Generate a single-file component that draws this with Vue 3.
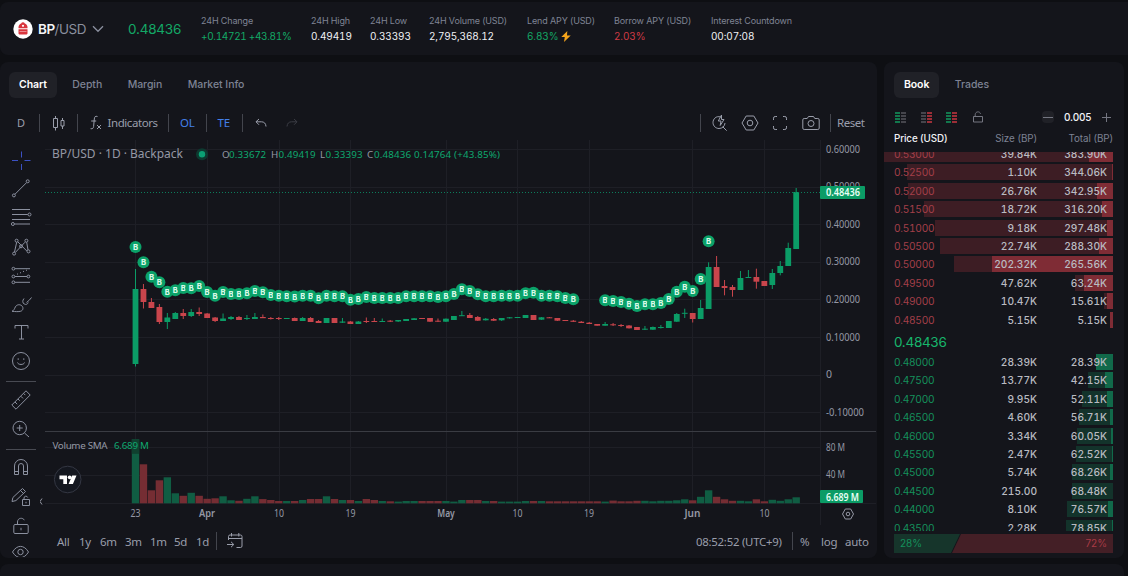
<script setup>
const stats = [
  { label: '24H Change', value: '+0.14721 +43.81%', tone: 'up change' },
  { label: '24H High', value: '0.49419', tone: '' },
  { label: '24H Low', value: '0.33393', tone: '' },
  { label: '24H Volume (USD)', value: '2,795,368.12', tone: '' },
  { label: 'Lend APY (USD)', value: '6.83%', tone: 'up', bolt: true },
  { label: 'Borrow APY (USD)', value: '2.03%', tone: 'down' },
  { label: 'Interest Countdown', value: '00:07:08', tone: '' }
]

// Left drawing toolbar: slot height and stroke paths in a 28x28 box
const tools = [
  { h: 28, cls: 'blue', d: 'M14.500 4.500v6M14.500 17v6M5 13.500h6M17.500 13.500h6' },
  { h: 26, d: 'M8 20.2 19.5 8.7M19.2 7.3a1.5 1.5 0 1 0 3 0a1.5 1.5 0 1 0-3 0M5.4 21.4a1.5 1.5 0 1 0 3 0a1.5 1.5 0 1 0-3 0' },
  { h: 32, d: 'M5 6.5h18M5 11.5h15.8M5 16.5h18M7.5 21h15.5M21 11.5a1.5 1.5 0 1 0 3 0a1.5 1.5 0 1 0-3 0M4.4 21a1.5 1.5 0 1 0 3 0a1.5 1.5 0 1 0-3 0' },
  { h: 26, d: 'M7.5 20 9.7 10.2M10.8 9.8 19.8 19M8.4 20.4 18 10.2M19.7 10.2 21 18M8.1 8.7a1.5 1.5 0 1 0 3 0a1.5 1.5 0 1 0-3 0M17.9 8.7a1.5 1.5 0 1 0 3 0a1.5 1.5 0 1 0-3 0M5.6 21.6a1.5 1.5 0 1 0 3 0a1.5 1.5 0 1 0-3 0M20 19.4a1.5 1.5 0 1 0 3 0a1.5 1.5 0 1 0-3 0M12.5 14.3a1.5 1.5 0 1 0 3 0a1.5 1.5 0 1 0-3 0' },
  { h: 32, d: 'M8 7.7h15M8 15.5h12M8 21.3h15M5 7.7a1.4 1.4 0 1 0 2.8 0a1.4 1.4 0 1 0-2.8 0M5 15.5a1.4 1.4 0 1 0 2.8 0a1.4 1.4 0 1 0-2.8 0M20 15.5a1.4 1.4 0 1 0 2.8 0a1.4 1.4 0 1 0-2.8 0M5 21.3a1.4 1.4 0 1 0 2.8 0a1.4 1.4 0 1 0-2.8 0M10 13.3l1-.5M13 12l1-.5M16 10.7l1-.5M19 9.5l1-.5' },
  { h: 28, d: 'M5 20.3c2.200-1 2.400-2.500 3.300-4.300 1.300-2.500 4.500-3 6.500-1.200 2 2 1.200 4.700-1 5.400-2.300.7-5.500.4-8.800.1zM17 7.500c-1.800 2-1.500 4.500.2 5.500 1.700 1 3.500.2 4-1.500M19.500 11.500c2-1.200 3.500-3 5-5' },
  { h: 28, d: 'M8 9.500v-3h13v3M14.500 6.500v13.500M12 20h5' },
  { h: 28, d: 'M5.500 14a8.500 8.500 0 1 0 17 0a8.500 8.500 0 1 0-17 0M10.500 15.500c.5 2.600 6.500 2.600 7 0M11.200 11.300v1.600M16.800 11.300v1.600' },
  { h: 13, sep: true },
  { h: 23, d: 'M4.800 19 19 4.800l4.200 4.200L9 23.200zM8 16l2.200 2.200M11 13l1.700 1.700M13.800 10.200l2.200 2.200M16.600 7.400l1.700 1.700' },
  { h: 36, d: 'M6 13a6.700 6.700 0 1 0 13.400 0a6.700 6.700 0 1 0-13.400 0M17.500 18l4.500 4M9.700 13h6M12.700 10v6' },
  { h: 5, sep: true },
  { h: 30, d: 'M7.500 21.500v-8.500a6.500 6.500 0 0 1 13 0v8.500h-4v-8.500a2.500 2.500 0 0 0-5 0v8.500zM7.500 18.500h4M16.500 18.500h4' },
  { h: 30, d: 'M5 18.500 5.900 14.500 15.500 5.500l3 3L8.900 17.600zM13.500 7.500l3 3M15.500 16.500h7v6h-7zM17 16.500v-1.500a1.900 1.900 0 0 1 3.700-.5M19 18.800v1.500' },
  { h: 28, d: 'M8 12.500h12a1.200 1.200 0 0 1 1.200 1.200v6.600a1.200 1.200 0 0 1-1.200 1.200h-12a1.200 1.200 0 0 1-1.200-1.200v-6.600a1.200 1.200 0 0 1 1.200-1.200M10.500 12.500v-2.500c0-4.300 5.500-4.800 6.800-1.800M14 15.800v2.500' },
  { h: 22, d: 'M5.500 15c4.500-7.500 11.500-7.500 16 0c-4.500 7.500-11.500 7.500-16 0M10.800 15a2.700 2.700 0 1 0 5.400 0a2.700 2.700 0 1 0-5.400 0' }
]

// Daily candles: direction, high, body top, body bottom, low, label y, volume height
const G = 1
const R = 0
const series = [
  [G, 269, 289, 364, 366.5, 247, 64], [R, 284, 289, 302, 308.5, 262.3, 39], [R, 298, 302, 308, 308, 276.7, 13],
  [R, 304, 307, 322, 324, 282.3, 23], [G, 313, 317.5, 322, 329, 291.7, 26], [G, 312, 313, 319, 319, 290.3, 10],
  [R, 309, 313, 316, 319, 288, 7.5], [G, 309, 312, 316, 317, 288.3, 10.5], [R, 307.5, 312, 314, 316, 286, 7.5],
  [R, 313, 313.5, 318, 318, 292, 4.5], [R, 317, 317.5, 321, 322, 295.7, 5], [G, 313.5, 318.5, 321, 321, 292, 7],
  [G, 316, 317, 319, 320, 294, 3], [R, 316, 317, 320, 320, 294, 2.5], [G, 315, 318, 319, 320, 293.3, 4.5],
  [G, 313, 317, 319, 319, 291, 7], [R, 314.5, 317, 318.2, 318, 292.3, 4.2], [R, 317, 318, 319, 319.5, 295, 3.3],
  [R, 317, 318, 319, 320, 295.7, 2.3], [G, 318, 318, 319, 319, 296.3, 2.3], [R, 317.5, 318, 321, 321, 296.5, 2.3],
  [G, 317, 318, 321, 321, 295.7, 3.3], [R, 317, 318, 322, 322, 295.7, 4.3], [R, 320, 321, 323, 323, 298.3, 4.3],
  [G, 318, 318, 323, 323, 295.7, 7], [R, 318, 318, 323, 323, 296.3, 4.3], [G, 318, 321.5, 322.7, 323, 296.3, 3.3],
  [R, 321, 321.5, 324, 324, 299.7, 3.3], [G, 321, 321.5, 324, 324, 299, 2.3], [R, 317.5, 321, 322, 323, 297, 4.3],
  [R, 318, 321, 322, 322, 298, 3.3], [G, 318.5, 321, 322, 322, 298, 2.3], [R, 320, 320.7, 321.7, 322, 298, 2],
  [G, 320, 320, 321.5, 322, 298, 1.7], [G, 319, 319, 321, 321, 296.3, 2.3], [G, 318, 318.3, 320, 320, 296.3, 2.3],
  [R, 318, 318, 319, 319, 296.3, 2.3], [R, 318, 318, 321.7, 322, 296.3, 2.3], [R, 318.5, 320.7, 321.7, 322, 297, 2.3],
  [G, 318.5, 318.7, 321.7, 322, 296.3, 2.3], [G, 316, 316, 320, 320, 294, 1.7], [G, 311, 315.2, 316.2, 316, 289.3, 3.3],
  [R, 313, 315, 318, 318, 291, 3.3], [R, 316, 317, 320.7, 321, 294.3, 3.3], [G, 318, 318.7, 320.3, 320.5, 296.3, 2.3],
  [R, 318, 319, 320.7, 321, 296.3, 2.3], [G, 318, 318, 320.3, 321, 295.7, 1.7], [G, 317, 317.3, 318.3, 318.5, 295.7, 1.7],
  [G, 317, 317, 318, 318, 295.7, 1.7], [G, 315, 315, 318, 318, 293.3, 2.3], [R, 315, 315, 320, 320, 292.7, 2.3],
  [G, 317, 317.3, 319.7, 320, 295.7, 2.3], [R, 317, 317.3, 318.3, 318, 295.7, 2], [R, 318, 318, 320.7, 321, 296.3, 2],
  [R, 320, 320, 321, 321, 298, 2], [R, 320, 320.7, 321.8, 322, 299.3, 2], [R, 321, 321.7, 323, 323, 0, 2],
  [R, 322, 322.7, 324, 324, 0, 2], [R, 324, 324, 325.7, 325.7, 0, 2], [G, 322, 324, 325.7, 325.7, 300.3, 1.7],
  [R, 323, 324.3, 325.3, 326, 301, 2.7], [R, 324, 325, 326, 327, 302, 2], [R, 325, 325.5, 328.3, 328.5, 303.7, 2],
  [R, 327, 327, 330, 330, 306, 2.5], [G, 326, 328.7, 329.7, 330, 304.3, 2.5], [G, 326.5, 327, 329.7, 330, 304.3, 2],
  [G, 325, 327, 328, 328.5, 303, 2.5], [G, 321, 321, 328, 328, 299, 2.5], [G, 313, 314, 321.7, 322, 291.7, 3],
  [G, 308.7, 312.8, 313.8, 318, 286.7, 4], [R, 313, 313, 319, 322.5, 291, 3], [G, 300, 308, 319, 319, 279, 6.5],
  [G, 262.3, 267, 309, 309, 241.3, 13], [R, 256, 267, 287, 287, 0, 6.5], [R, 280, 286, 288, 295.3, 0, 4],
  [R, 285, 287, 290, 296.7, 0, 2.5], [G, 271, 278, 290, 290, 0, 2.5], [G, 270, 277, 278, 278, 0, 2],
  [R, 268.7, 277, 281.7, 288.7, 0, 4], [R, 281, 281, 286, 286, 0, 2], [G, 269, 273, 285, 289, 0, 3.5],
  [G, 261, 266, 273, 275.3, 0, 2.5], [G, 242.7, 248, 266, 266, 0, 4], [G, 188, 192, 249, 249, 0, 6]
]
const candles = series.map(([up, hi, top, bot, lo, mark, vol], i) => ({
  x: 135.5 + i * 7.96, cls: up ? 'g' : 'r', hi, top, bot, lo, mark, vol
}))

const priceTicks = [
  ['0.60000', 149], ['0.50000', 186.5], ['0.40000', 224], ['0.30000', 261.5],
  ['0.20000', 299.2], ['0.10000', 337], ['0', 374.5], ['-0.10000', 412]
]
const timeTicks = [
  ['23', 135.5], ['Apr', 207], ['10', 279], ['19', 350.5], ['May', 446],
  ['10', 517.5], ['19', 589], ['Jun', 692.5], ['10', 764.5]
]
const ranges = ['All', '1y', '6m', '3m', '1m', '5d', '1d']

// Price, size, total, total depth width, size depth width
const asks = [
  ['0.53000', '39.84K', '383.90K', 229, 24], ['0.52500', '1.10K', '344.06K', 206, 1],
  ['0.52000', '26.76K', '342.95K', 205, 16], ['0.51500', '18.72K', '316.20K', 189, 11],
  ['0.51000', '9.18K', '297.48K', 178, 6], ['0.50500', '22.74K', '288.30K', 173, 14],
  ['0.50000', '202.32K', '265.56K', 159, 121], ['0.49500', '47.62K', '63.24K', 38, 29],
  ['0.49000', '10.47K', '15.61K', 9, 6], ['0.48500', '5.15K', '5.15K', 3, 3]
]
const bids = [
  ['0.48000', '28.39K', '28.39K', 17, 17], ['0.47500', '13.77K', '42.15K', 25, 8],
  ['0.47000', '9.95K', '52.11K', 31, 6], ['0.46500', '4.60K', '56.71K', 34, 3],
  ['0.46000', '3.34K', '60.05K', 36, 2], ['0.45500', '2.47K', '62.52K', 37, 1.3],
  ['0.45000', '5.74K', '68.26K', 41, 3], ['0.44500', '215.00', '68.48K', 41, 0],
  ['0.44000', '8.10K', '76.57K', 46, 5], ['0.43500', '2.28K', '78.85K', 47, 1.3]
]
const bookModes = [['mg', 'mx'], ['mx', 'mr'], ['mg', 'mr']]
</script>

<template>
  <div class="app">
    <header class="panel top">
      <svg class="coin" width="20" height="20" viewBox="0 0 20 20">
        <circle cx="10" cy="10" r="9.7" fill="#fff" />
        <path d="M8.200 4.500a1.900 1.900 0 0 1 3.600 0c1.700.6 2.700 2 2.700 3.800v1H5.500v-1c0-1.800 1-3.200 2.700-3.800zM5.500 10.300h9v4.300a.8.8 0 0 1-.8.8H6.300a.8.8 0 0 1-.8-.8z" />
        <circle cx="10" cy="6.8" r="1.1" fill="#fff" />
        <path d="M6.500 12.500h7" />
      </svg>
      <div class="pair"><b>BP</b>/USD</div>
      <svg class="chev" width="12" height="8" viewBox="0 0 12 8"><path d="M1 1.300 6 6.300l5-5" /></svg>
      <div class="last">0.48436</div>
      <div class="stats">
        <div v-for="s in stats" :key="s.label">
          <label>{{ s.label }}</label>
          <p :class="s.tone">{{ s.value }}<svg v-if="s.bolt" width="10" height="11" viewBox="0 0 10 11"><path d="M6.300 0 .3 6h3.500L3 11 9.700 4.500H6z" /></svg></p>
        </div>
      </div>
    </header>

    <div class="main">
      <section class="panel chart">
        <nav class="tabs">
          <span class="on">Chart</span><span>Depth</span><span>Margin</span><span>Market Info</span>
        </nav>
        <div class="toolbar">
          <span class="day">D</span><i class="bar"></i>
          <svg class="kline" width="14" height="18" viewBox="0 0 14 18"><path d="M1.500 4.500h4v9h-4zM3.500 2v2.500M3.500 13.500v3M9 6.500h3v5.500H9zM10.500 4v2.500M10.500 12v3" /></svg>
          <i class="bar"></i>
          <svg class="fx" width="14" height="18" viewBox="0 0 14 18"><path d="M8.500 2.500c-2.200-.8-3 .4-3.200 2.500l-.7 7.500c-.2 1.700-1 2.500-3 2.200M2.200 7h5M8 11l4 4M12 11l-4 4" /></svg>
          <span class="ind">Indicators</span><i class="bar"></i>
          <span class="blue ol">OL</span><i class="bar"></i>
          <span class="blue te">TE</span><i class="bar"></i>
          <svg class="undo" width="12" height="10" viewBox="0 0 12 10"><path d="M4 1 1 3.800l3 3M1 3.800h5.500c2.500 0 4.300 1.500 4.500 4.700" /></svg>
          <svg class="redo" width="12" height="10" viewBox="0 0 12 10"><path d="M8 1l3 2.800-3 3M11 3.800H5.500C3 3.800 1.200 5.300 1 8.500" /></svg>
          <div class="right">
            <i class="bar"></i>
            <svg width="18" height="18" viewBox="0 0 18 18"><path d="M9.500 3C5.200 1.500 2 5 2 8.500s2.800 6 6 6 5.800-2.200 6-5.500M11.700 12.700l4 4M10.500 1 7.300 7H10l-.8 4.500L13 5.500h-2.500z" /></svg>
            <svg width="18" height="18" viewBox="0 0 18 18"><path d="M5.200 2h7.600L17 9l-4.200 7H5.200L1 9zM6.200 9a2.800 2.800 0 1 0 5.600 0a2.800 2.800 0 1 0-5.600 0" /></svg>
            <svg width="18" height="18" viewBox="0 0 18 18"><path d="M2.500 6V4.200A1.700 1.700 0 0 1 4.200 2.500H6M12 2.500h1.800a1.700 1.700 0 0 1 1.700 1.700V6M15.500 12v1.800a1.700 1.700 0 0 1-1.700 1.700H12M6 15.500H4.200a1.700 1.700 0 0 1-1.700-1.700V12" /></svg>
            <svg width="18" height="18" viewBox="0 0 18 18"><path d="M2.200 4.500h3L6.500 2.500h5l1.300 2h3a1.400 1.400 0 0 1 1.400 1.400v8.200a1.400 1.400 0 0 1-1.400 1.400H2.200A1.400 1.400 0 0 1 .8 14.100V5.900a1.400 1.400 0 0 1 1.400-1.400M6 9.500a3 3 0 1 0 6 0a3 3 0 1 0-6 0" /></svg>
            <i class="bar"></i>
            <span class="reset">Reset</span>
          </div>
        </div>
        <div class="body">
          <aside class="rail">
            <div v-for="(t, i) in tools" :key="i" class="slot" :style="{ height: t.h + 'px' }">
              <i v-if="t.sep"></i>
              <svg v-else :class="t.cls" width="28" height="28" viewBox="0 0 28 28"><path :d="t.d" /></svg>
            </div>
          </aside>
          <div class="plot">
            <svg class="canvas" width="837" height="385" viewBox="40 140 837 385">
              <g class="grid">
                <path v-for="t in priceTicks" :key="'p' + t[0]" :d="`M45 ${Math.round(t[1]) + 0.5}H820`" />
                <path v-for="t in timeTicks" :key="'t' + t[1]" :d="`M${Math.floor(t[1]) + 0.5} 140V503`" />
                <path d="M45 447.500H820M45 475.500H820M45 503.500H876M820.500 140V525" />
              </g>
              <path class="divider" d="M45 431.500H876" />
              <g v-for="(c, i) in candles" :key="i" :class="c.cls">
                <rect class="vol" :x="c.x - 3.7" :y="503.3 - c.vol" width="7.4" :height="c.vol" />
                <path :d="`M${c.x} ${c.hi}V${c.lo}`" />
                <rect :x="c.x - 2.9" :y="c.top" width="5.8" :height="c.bot - c.top" />
              </g>
              <rect class="shade" x="131.8" y="439.3" width="7.4" height="14.5" />
              <path class="lastline" d="M45 192.500H820" stroke-dasharray="1 2" />
              <g v-for="(c, i) in candles" :key="'m' + i">
                <template v-if="c.mark">
                  <circle :cx="c.x" :cy="c.mark" r="6" fill="#0ba269" />
                  <text class="b" :x="c.x" :y="c.mark + 3">B</text>
                </template>
              </g>
              <g class="lbl">
                <text v-for="t in priceTicks" :key="t[0]" x="826" :y="t[1] + 3.5" :textLength="t[0] === '0' ? 6 : t[0][0] === '-' ? 38 : 34" lengthAdjust="spacingAndGlyphs">{{ t[0] }}</text>
                <text x="826" y="450.5" textLength="19" lengthAdjust="spacingAndGlyphs">80 M</text>
                <text x="826" y="478" textLength="19" lengthAdjust="spacingAndGlyphs">40 M</text>
                <text v-for="t in timeTicks" :key="'x' + t[1]" :class="{ month: t[0].length > 2 }" :x="t[1]" y="517" text-anchor="middle" :textLength="t[0].length > 2 ? (t[0] === 'May' ? 17.5 : 16) : 10" lengthAdjust="spacingAndGlyphs">{{ t[0] }}</text>
              </g>
              <rect x="820" y="186" width="45" height="13" rx="1" fill="#0b9c66" />
              <text class="tag" x="826" y="196.3" textLength="34" lengthAdjust="spacingAndGlyphs">0.48436</text>
              <rect x="820" y="490" width="43" height="13" rx="1" fill="#0b9c66" />
              <text class="tag" x="826" y="500.5" textLength="33" lengthAdjust="spacingAndGlyphs">6.689 M</text>
              <text class="title" x="52" y="158" textLength="131" lengthAdjust="spacingAndGlyphs">BP/USD · 1D · Backpack</text>
              <circle cx="202" cy="154.3" r="6" fill="#0d3a30" />
              <circle cx="202" cy="154.3" r="3.2" fill="#0ba074" />
              <g class="ohlc">
                <text x="222" y="158">O</text><text class="v" x="229" y="158" textLength="37">0.33672</text>
                <text x="271" y="158">H</text><text class="v" x="278.5" y="158" textLength="37">0.49419</text>
                <text x="320" y="158">L</text><text class="v" x="325.5" y="158" textLength="37">0.33393</text>
                <text x="367" y="158">C</text><text class="v" x="374" y="158" textLength="126">0.48436 0.14764 (+43.85%)</text>
              </g>
              <text class="sma" x="52.5" y="449" textLength="55">Volume SMA</text>
              <text class="sma v" x="114" y="449" textLength="35">6.689 M</text>
              <circle cx="67.7" cy="479.5" r="13.3" fill="#14171f" stroke="#343743" />
              <path class="mark" d="M59.500 475.500h7.500v8.500h-3.700v-4.800h-3.800zM72.200 475.500h4.300l-3.600 8.500h-4.300z" />
              <circle cx="69.7" cy="477.3" r="1.9" fill="#fff" />
              <path d="M845.300 509h5.400l2.800 5-2.800 5h-5.400l-2.800-5z" class="gear" />
              <circle cx="848" cy="514" r="1.8" class="gear" />
              <path d="M42 498.500l-2 3 2 3" class="gear" />
            </svg>
            <footer class="foot">
              <span v-for="r in ranges" :key="r" :class="'r' + r">{{ r }}</span>
              <i class="bar"></i>
              <svg width="18" height="18" viewBox="0 0 18 18"><path d="M2.500 8V4.500A1.500 1.500 0 0 1 4 3h10.500A1.500 1.500 0 0 1 16 4.500v9.500a1.500 1.500 0 0 1-1.500 1.500h-4M2.500 6.500H16M5.500 1v3.500M12.800 1v3.500M1 12.500h6.500M5 9.800l2.800 2.700L5 15.200" /></svg>
              <span class="clock">08:52:52 (UTC+9)</span><i class="bar"></i>
              <span class="pct">%</span><span class="log">log</span><span class="auto">auto</span>
            </footer>
          </div>
        </div>
      </section>

      <section class="panel book">
        <nav class="tabs"><span class="on">Book</span><span>Trades</span></nav>
        <div class="tools">
          <svg v-for="(m, i) in bookModes" :key="i" width="11" height="11" viewBox="0 0 11 11">
            <path :class="m[0]" d="M0 1h5M0 4h5M0 7h5M0 10h5" /><path :class="m[1]" d="M6 1h5M6 4h5M6 7h5M6 10h5" />
          </svg>
          <svg class="lock" width="12" height="12" viewBox="0 0 12 12"><path d="M1.500 5.500h9v5.500h-9zM3.200 5.500V3.700C3.200.2 8 0 8.500 2.800" /></svg>
          <b class="minus"></b><span>0.005</span>
          <svg class="plus" width="9" height="9" viewBox="0 0 9 9"><path d="M4.500 0v9M0 4.500h9" /></svg>
        </div>
        <div class="heads"><span>Price (USD)</span><span>Size (BP)</span><span>Total (BP)</span></div>
        <div class="rows asks">
          <div v-for="r in asks" :key="r[0]" class="row">
            <i class="depth" :style="{ width: r[3] + 'px' }"></i><i class="depth own" :style="{ width: r[4] + 'px' }"></i>
            <span>{{ r[0] }}</span><span>{{ r[1] }}</span><span>{{ r[2] }}</span>
          </div>
        </div>
        <div class="mid">0.48436</div>
        <div class="rows bids">
          <div v-for="r in bids" :key="r[0]" class="row">
            <i class="depth" :style="{ width: r[3] + 'px' }"></i><i class="depth own" :style="{ width: r[4] + 'px' }"></i>
            <span>{{ r[0] }}</span><span>{{ r[1] }}</span><span>{{ r[2] }}</span>
          </div>
        </div>
        <div class="ratio"><div class="buy">28%</div><div class="sell">72%</div></div>
      </section>
    </div>
    <div class="panel next"></div>
  </div>
</template>

<style>
body { background: #0e0f13; overflow: hidden; }
</style>

<style scoped>
* { box-sizing: border-box; }
.app { width: 1128px; height: 576px; padding-top: 2px; overflow: hidden; background: #0e0f13; font-family: Inter, "Liberation Sans", sans-serif; color: #8b909f; display: flex; flex-direction: column; }
svg { display: block; flex: none; }
svg path { fill: none; stroke: currentColor; }
.panel { background: #14151b; border-radius: 8px; }
.top { height: 53px; flex: none; display: flex; align-items: center; padding-left: 12.5px; border-radius: 8px 0 0 8px; }
.coin path:nth-child(2) { fill: #d9363e; stroke: none; }
.coin path:last-child { stroke: #f0a0a4; stroke-width: .8; }
.pair { margin-left: 5.5px; width: 48px; font-size: 13.5px; letter-spacing: -.5px; white-space: nowrap; }
.pair b { color: #f4f4f6; font-weight: 600; }
.chev { margin-left: 6px; }
.chev path { stroke-width: 1.3; }
.last { margin-left: 24px; width: 73px; font-size: 13.5px; color: #13a866; letter-spacing: -.2px; }
.stats { display: grid; grid-template-columns: 110px 59px 59px 98px 87px 97px 100px; white-space: nowrap; margin-top: -1px; }
.stats label { display: block; font-size: 9px; letter-spacing: -.14px; line-height: 12px; margin-top: 1px; color: #7f8494; }
.stats p { margin: 3px 0 0; font-size: 10px; line-height: 12px; color: #f0f1f4; display: flex; align-items: center; font-variant-numeric: tabular-nums; letter-spacing: -.12px; }
.stats .up { color: #13a866; }
.stats .change { letter-spacing: -.33px; }
.stats .down { color: #d03a45; }
.stats p svg { margin-left: 3px; }
.stats p path { fill: #f5a41b; stroke: none; }
.main { margin-top: 7px; height: 496px; flex: none; display: flex; gap: 7px; }
.chart { width: 877px; overflow: hidden; }
.tabs { display: flex; height: 26px; margin: 10px 0 0 9px; }
.tabs span { font-size: 10.5px; line-height: 25px; font-weight: 500; letter-spacing: -.05px; color: #7d8293; padding: 0 10px; margin-right: 5.5px; white-space: nowrap; }
.tabs .on { background: #202127; color: #fff; border-radius: 6px; font-weight: 600; letter-spacing: -.1px; }
.toolbar { display: flex; align-items: center; height: 20px; margin-top: 14.5px; font: 12px "Noto Sans", sans-serif; color: #9a9eab; white-space: nowrap; }
.toolbar span { line-height: 18px; }
.bar { width: 1px; height: 18px; background: #43454d; flex: none; }
.day { width: 22px; margin-left: 17px; font-size: 11px; }
.kline { margin: 0 11px 0 11.5px; }
.fx { margin: 0 5px 0 11px; }
.ind { width: 60.5px; font-size: 11.5px; letter-spacing: -.42px; }
.blue { color: #437fe8; }
.ol { width: 25.5px; margin-left: 11px; font-size: 11.5px; letter-spacing: -.2px; }
.te { width: 24px; margin-left: 11px; font-size: 11.5px; letter-spacing: -.2px; }
.undo { margin: 0 19px 0 12px; }
.redo { color: #3b3d45; }
.right { margin-left: auto; display: flex; align-items: center; padding-right: 12px; }
.right svg { margin-left: 9.5px; }
.right svg + svg { margin-left: 12.3px; }
.right svg + .bar { margin-left: 10.5px; }
.reset { width: 28px; margin-left: 6px; font-size: 11.5px; letter-spacing: -.45px; }
.body { display: flex; height: 425px; margin-top: 7.5px; }
.rail { width: 40px; padding-top: 7px; flex: none; height: 417px; overflow: hidden; }
.slot { display: flex; align-items: center; justify-content: center; padding-left: 2px; }
.slot i { width: 30px; height: 1px; background: #484a52; }
.slot .blue { color: #3c51c4; }
.plot { width: 837px; }
.canvas .grid path { stroke: #1e1f26; }
.canvas .g rect { fill: #0b9c66; }
.canvas .g path { stroke: #0b9c66; }
.canvas .r rect { fill: #c9454c; }
.canvas .r path { stroke: #c9454c; }
.canvas .g .vol { fill: #105d43; }
.canvas .r .vol { fill: #752d33; }
.canvas .shade { fill: #10402f; }
.canvas .mark { fill: #fff; stroke: none; }
.canvas .divider { stroke: #3a3c43; }
.canvas .lastline { stroke: #0c7c5b; }
.canvas text { font-family: "Noto Sans", sans-serif; fill: #9598a5; }
.canvas .b { font: 700 8.3px "Noto Sans", sans-serif; fill: #d8f8e6; text-anchor: middle; }
.canvas .lbl text { font-size: 10.3px; }
.canvas .lbl .month { font-weight: 600; }
.canvas .tag { font-size: 10.3px; font-weight: 600; fill: #e8fff5; }
.canvas .title { font-size: 12.5px; }
.canvas .ohlc text, .canvas .sma { font-size: 9.8px; }
.canvas .ohlc .v, .canvas .sma.v { fill: #0ea86f; }
.canvas .gear { fill: none; stroke: #9598a5; }
.foot { display: flex; align-items: center; height: 24px; margin-top: 4px; padding: 0 9px 0 17px; font: 11.5px "Noto Sans", sans-serif; letter-spacing: -.25px; color: #9a9eab; white-space: nowrap; }
.rAll { width: 22px; }
.r1y { width: 21px; }
.r6m { width: 25px; }
.r3m { width: 25px; }
.r1m { width: 24px; }
.r5d { width: 22px; }
.r1d { width: 20px; }
.foot svg { margin-left: 9px; }
.clock { margin-left: auto; width: 96px; font-size: 11.4px; }
.pct { margin-left: 7px; width: 21px; }
.log { width: 24px; }
.auto { width: 23px; }
.book { width: 240px; overflow: hidden; display: flex; flex-direction: column; }
.book .tabs { flex: none; margin-left: 10px; }
.tools { display: flex; align-items: center; height: 16px; margin: 11px 0 0 11px; flex: none; font-size: 10px; font-weight: 500; color: #f2f2f5; }
.tools svg { margin-right: 14.5px; }
.tools span { letter-spacing: -.15px; }
.tools path { stroke-width: 1.5; }
.tools .mg { stroke: #12995f; }
.tools .mr { stroke: #c93742; }
.tools .mx { stroke: #55565d; }
.tools .lock, .tools .plus { color: #747681; }
.tools .lock path, .tools .plus path { stroke-width: 1; }
.minus { width: 12px; height: 12px; border-radius: 4px; background: #202127; margin: 0 10px 0 44px; padding: 5.5px 1px; }
.minus::before { content: ""; display: block; height: 1px; background: #747681; }
.tools .plus { margin: 0 0 0 10.5px; }
.heads, .row { display: grid; grid-template-columns: 60px 83px 70px; padding-left: 10px; position: relative; }
.heads { flex: none; height: 21px; margin-top: 3px; line-height: 22px; font-size: 9.8px; letter-spacing: -.06px; color: #7d8293; }
.heads span:first-child { color: #f2f2f5; font-weight: 500; letter-spacing: -.1px; white-space: nowrap; }
.heads span + span, .row span + span { text-align: right; }
.heads span:last-child { margin-right: -6px; }
.rows { flex: none; overflow: hidden; display: flex; flex-direction: column; }
.asks { height: 178.5px; justify-content: flex-end; margin-top: 2.5px; }
.bids { height: 177px; }
.row { flex: none; height: 18.4px; line-height: 16px; font-size: 10.2px; font-weight: 500; font-variant-numeric: tabular-nums; color: #b9bbc1; }
.row span { position: relative; }
.row span:first-of-type { font-weight: 400; letter-spacing: -.3px; }
.asks .row span:first-of-type { color: #a33f49; }
.bids .row span:first-of-type { color: #14905b; }
.depth { position: absolute; right: 11px; top: 0; height: 16px; background: #3d1d24; }
.asks .own { background: #7f2c35; }
.bids .depth { background: #13332b; }
.bids .own { background: #11694a; }
.mid { flex: none; height: 24px; line-height: 24px; padding-left: 10px; font-size: 13.5px; color: #17b56c; letter-spacing: -.3px; }
.ratio { flex: none; margin: 3px 11px 0 10px; height: 19px; position: relative; display: flex; font-size: 10px; line-height: 18px; }
.buy { width: 66px; padding-left: 6px; background: #16352b; color: #14905b; clip-path: polygon(0 0, 100% 0, 57px 100%, 0 100%); }
.sell { flex: 1; margin-left: -8px; text-align: right; padding-right: 6px; background: #441f26; color: #a83a45; clip-path: polygon(9px 0, 100% 0, 100% 100%, 0 100%); }
.next { margin-top: 6px; height: 20px; flex: none; width: 1124px; }
</style>
